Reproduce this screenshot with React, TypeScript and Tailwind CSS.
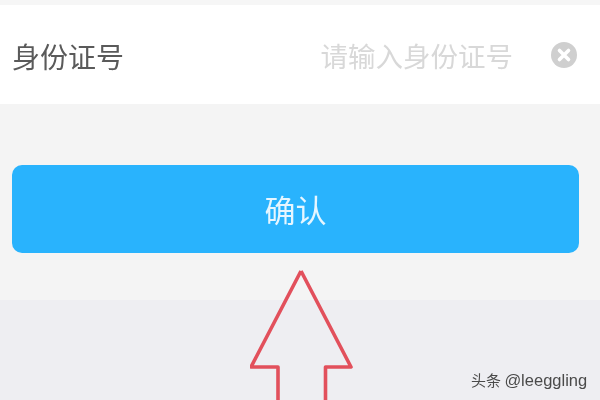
const cjk = "font-['Noto_Sans_CJK_SC','Liberation_Sans',sans-serif]";

function ClearIcon() {
  return (
    <svg width="28" height="28" viewBox="0 0 28 28" className="blur-[0.5px]">
      <circle cx="14" cy="14" r="13" fill="#cfcfcf" />
      <path d="M9.500 9.500l9 9M18.500 9.500l-9 9" stroke="#fff" strokeWidth="3.600" strokeLinecap="round" />
    </svg>
  );
}

function Arrow() {
  return (
    <svg width="110" height="134" viewBox="0 0 110 134" fill="none" className="blur-[0.4px]">
      <path
        d="M51 5L1 101H28V134M51 5L101 101H75.500V134"
        stroke="#e2505c"
        strokeWidth="3.600"
        strokeLinejoin="round"
      />
    </svg>
  );
}

export default function App() {
  return (
    <div className={`relative flex h-[400px] w-[600px] flex-col overflow-hidden bg-[#eeeef2] ${cjk}`}>
      <div className="h-[5px] bg-[#f6f6f6]" />
      <div className="flex h-[99px] items-center justify-between bg-white pl-[12px] pr-[22px]">
        <span className="pt-[2px] text-[28px] leading-none text-[#5a5a5a] blur-[0.4px]">身份证号</span>
        <div className="flex items-center gap-[37px]">
          <span className="pt-[2px] text-[27.500px] leading-none text-[#d8d8d8] blur-[0.4px]">请输入身份证号</span>
          <ClearIcon />
        </div>
      </div>
      <div className="h-[196px] bg-[#f4f4f4] px-[12px] pt-[61px] pr-[21px]">
        <button className="flex h-[88px] w-full items-center justify-center rounded-[10px] bg-[#29b3fd] text-[31px] text-[#e6f6ff]">
          <span className="blur-[0.4px]">确认</span>
        </button>
      </div>
      <div className="absolute left-[250px] top-[266px]">
        <Arrow />
      </div>
      <div className="absolute left-[471px] top-[370px] text-[15px] leading-5 text-[#4a4a4a] blur-[0.3px]">
        头条 <span className="font-['Liberation_Sans',sans-serif] text-[16.500px]">@leeggling</span>
      </div>
    </div>
  );
}
